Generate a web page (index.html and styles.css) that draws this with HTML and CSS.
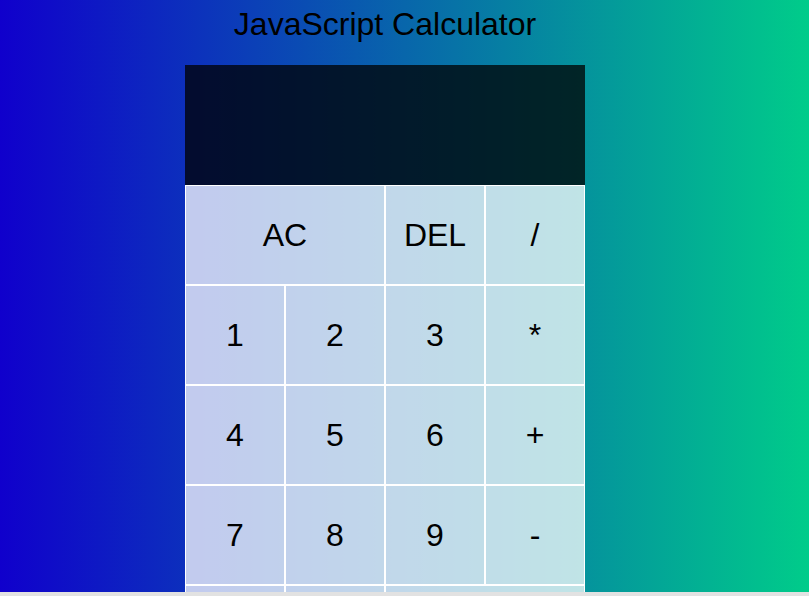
FILE: index.html
```
<!DOCTYPE html>
<html>
<head>
<meta charset="utf-8">
<link rel="stylesheet" href="styles.css">
</head>
<body>
<div class="app">
  <h1 class="title">JavaScript Calculator</h1>
  <div class="calculator-grid">
    <div class="output">
      <div class="previous-operand"></div>
      <div class="current-operand"></div>
    </div>
    <button class="span-two">AC</button>
    <button>DEL</button>
    <button>/</button>
    <button>1</button>
    <button>2</button>
    <button>3</button>
    <button>*</button>
    <button>4</button>
    <button>5</button>
    <button>6</button>
    <button>+</button>
    <button>7</button>
    <button>8</button>
    <button>9</button>
    <button>-</button>
    <button>.</button>
    <button>0</button>
    <button class="span-two">=</button>
  </div>
</div>
</body>
</html>
```
FILE: styles.css
```
*, *::before, *::after {
  box-sizing: border-box;
  font-family: "Liberation Sans", Arial, sans-serif;
  font-weight: normal;
}

html {
  background: #e2e2e2;
}

body {
  margin: 0;
  padding: 0;
  height: 592px;
  overflow: hidden;
  background: linear-gradient(to right, #1000cc, #00cc8a);
}

.app {
  width: 770px;
  display: flex;
  flex-direction: column;
  align-items: center;
}

.title {
  margin: 6px 0 22px;
  font-size: 32px;
  line-height: normal;
  color: #000;
}

.calculator-grid {
  display: grid;
  grid-template-columns: repeat(4, 100px);
  grid-template-rows: 120px repeat(5, 100px);
}

.calculator-grid > button {
  font-size: 32px;
  border: 1px solid #fff;
  outline: none;
  background-color: rgba(255, 255, 255, 0.75);
  color: #000;
  padding: 0;
  margin: 0;
}

.span-two {
  grid-column: span 2;
}

.output {
  grid-column: 1 / -1;
  background-color: rgba(0, 0, 0, 0.75);
  display: flex;
  flex-direction: column;
  align-items: flex-end;
  justify-content: space-around;
  padding: 10px;
}
```
